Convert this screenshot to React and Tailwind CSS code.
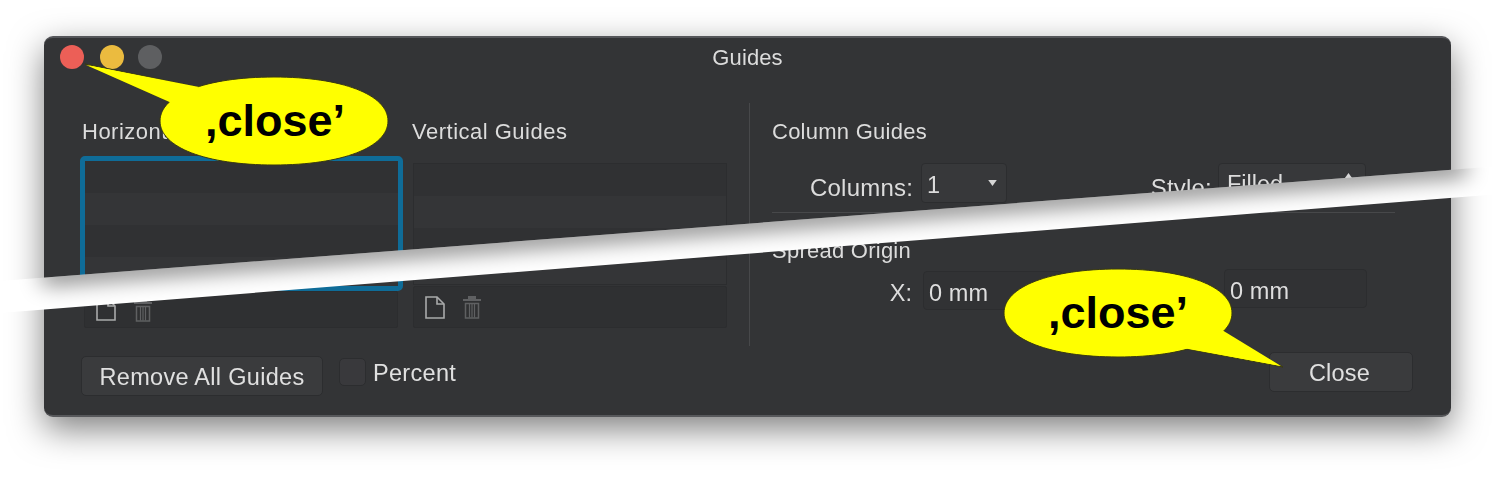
const FileIcon = ({ className }) => (
  <svg viewBox="0 0 20 23" className={className} fill="none" stroke="currentColor" strokeWidth="1.6">
    <path d="M1 1h11l7 7v14H1z" />
    <path d="M12 1v7h7" />
  </svg>
);

const TrashIcon = ({ className }) => (
  <svg viewBox="0 0 18 24" className={className} fill="none" stroke="currentColor" strokeWidth="1.5">
    <path d="M0 6h18V4H13V1H5v3H0z" fill="currentColor" stroke="none" />
    <path d="M2.5 8.5h13V23h-13z" />
    <path d="M6.5 9v13.5M9 9v13.5M11.5 9v13.5" strokeWidth="1.2" />
  </svg>
);

const Rows = ({ count }) => (
  <div className="flex flex-col">
    {Array.from({ length: count }).map((_, i) => (
      <div key={i} className={i % 2 === 0 ? "h-[32px] bg-[#303133]" : "h-[32px] bg-[#343537]"} />
    ))}
  </div>
);

const Toolbar = ({ h, pl }) => (
  <div className={`${h} ${pl} flex items-center gap-[18px] bg-[#2f3032] border border-[#2c2d2f] rounded-[2px] text-[#a9aaab]`}>
    <FileIcon className="w-[20px] h-[23px]" />
    <TrashIcon className="w-[18px] h-[24px] text-[#5f6062]" />
  </div>
);

const inputCls = "h-[39px] flex items-center pl-[5px] pt-[6px] bg-[#313234] border border-[#2c2d2f] rounded-[4px] text-[23.5px] tracking-[0.1px] text-[#dedede]";

export default function App() {
  return (
    <div className="relative w-[1500px] h-[488px] overflow-hidden bg-white font-['Liberation_Sans',Arial,sans-serif]">
      <div className="ml-[44px] mt-[36px] w-[1407px] absolute top-0 left-0">
        <div className="h-[381px] rounded-[9px] bg-[#333436] border-t-2 border-t-[#55565a] border-b-2 border-b-[#57585b] shadow-[0_12px_34px_rgba(0,0,0,0.5)] text-[#dcdcdc] blur-[0.4px]">
          <div className="h-[40px] grid grid-cols-[1fr_auto_1fr] items-center">
            <div className="flex items-center pl-[16px] pb-[2px]">
              <span className="w-[24px] h-[24px] rounded-full bg-[#ec5f57]" />
              <span className="ml-[16px] w-[24px] h-[24px] rounded-full bg-[#ebbb3f]" />
              <span className="ml-[14px] w-[24px] h-[24px] rounded-full bg-[#5e5f61]" />
            </div>
            <div className="text-[22px] leading-[26px] tracking-[0.1px]">Guides</div>
            <div />
          </div>

          <div className="mt-[25px] h-[243px] flex pl-[36px]">
            <div className="w-[323px]">
              <div className="h-[24px] mt-[17px] ml-[2px] text-[22px] leading-[24px] tracking-[0.5px] whitespace-nowrap">Horizontal Guides</div>
              <div className="mt-[12px] h-[135px] border-[5px] border-[#0f6c98] rounded-[5px] overflow-hidden bg-[#303133]">
                <Rows count={4} />
              </div>
              <div className="ml-[4px] mr-[5px]">
                <Toolbar h="h-[37px]" pl="pl-[11px]" />
              </div>
            </div>

            <div className="ml-[10px] w-[314px]">
              <div className="h-[24px] mt-[17px] -ml-[1px] text-[22px] leading-[24px] tracking-[0.5px]">Vertical Guides</div>
              <div className="mt-[19px] h-[122px] border border-[#2c2d2f] overflow-hidden">
                <Rows count={4} />
              </div>
              <div className="mt-[1px]">
                <Toolbar h="h-[42px]" pl="pl-[11px]" />
              </div>
            </div>

            <div className="ml-[22px] w-[1px] bg-[#47484a]" />

            <div className="ml-[22px] w-[623px] text-[22px]">
              <div className="h-[24px] mt-[17px] leading-[24px] tracking-[0.25px]">Column Guides</div>
              <div className="mt-[19px] flex items-center h-[40px]">
                <div className="w-[141px] text-right text-[24px] tracking-[0.2px] pt-[10px]">Columns:</div>
                <div className="ml-[8px] w-[86px] h-[40px] flex items-center justify-between pl-[5px] pr-[9px] bg-[#37383a] border border-[#2c2d2f] rounded-[4px] text-[23.5px]">
                  <span className="pt-[6px]">1</span>
                  <svg viewBox="0 0 10 7" className="w-[9px] h-[6px]"><path d="M0 0h10L5 7z" fill="#d6d6d6" /></svg>
                </div>
                <div className="w-[205px] text-right text-[24px] tracking-[0.2px] pt-[10px]">Style:</div>
                <div className="ml-[6px] w-[148px] h-[40px] flex items-center justify-between pl-[8px] pr-[12px] bg-[#37383a] border border-[#2c2d2f] rounded-[4px] text-[23.5px]">
                  <span className="pt-[4px]">Filled</span>
                  <svg viewBox="0 0 10 7" className="w-[9px] h-[6px] mb-[14px]"><path d="M0 7h10L5 0z" fill="#d6d6d6" /></svg>
                </div>
              </div>
              <div className="mt-[9px] h-[1px] bg-[#47484a]" />
              <div className="mt-[26px] h-[24px] leading-[24px] tracking-[0.25px]">Spread Origin</div>
              <div className="mt-[8px] flex items-start">
                <div className="w-[140px] mt-[5px] text-right text-[23.5px]">X:</div>
                <div className={`${inputCls} ml-[11px] w-[140px]`}>0 mm</div>
                <div className="w-[151px] mt-[5px] text-right text-[23.5px]">Y:</div>
                <div className={`${inputCls} -mt-[2px] ml-[10px] w-[143px]`}>0 mm</div>
              </div>
            </div>
          </div>

          <div className="mt-[6px] flex items-start pl-[37px] pr-[38px]">
            <button className="mt-[4px] pt-[3px] w-[242px] h-[40px] bg-[#3a3b3d] border border-[#2c2d2f] rounded-[5px] text-[23.5px] tracking-[0.3px] text-[#e0e0e0]">Remove All Guides</button>
            <span className="mt-[6px] ml-[16px] w-[27px] h-[28px] rounded-[5px] bg-[#39393c] border border-[#2c2d2f]" />
            <span className="mt-[7px] ml-[7px] text-[23.5px] leading-[28px] tracking-[0.3px] text-[#e0e0e0]">Percent</span>
            <button className="ml-auto pt-[3px] pr-[3px] w-[144px] h-[40px] bg-[#3a3b3d] border border-[#2c2d2f] rounded-[5px] text-[23.5px] tracking-[0.2px] text-[#e0e0e0]">Close</button>
          </div>
        </div>
      </div>

      <svg className="absolute left-0 top-0" width="1500" height="488" viewBox="0 0 1500 488">
        <defs>
          <clipPath id="tear"><path d="M0 281L1500 166V194L0 313z" /></clipPath>
          <filter id="soft" x="-5%" y="-100%" width="110%" height="300%"><feGaussianBlur stdDeviation="11" /></filter>
        </defs>
        <path d="M0 281L1500 166V194L0 313z" fill="#fff" />
        <g clipPath="url(#tear)">
          <path d="M42 265L1466 156L1466 176L42 285z" fill="#000" opacity="0.5" filter="url(#soft)" />
        </g>
        <g stroke="#3a3a10" strokeWidth="1">
          <path d="M85 64L203 88L170 102z" fill="#ffff00" />
          <path d="M160 121C160 94.6 206 77 274 77C342 77 388 94.6 388 121C388 147.4 342 165 274 165C206 165 160 147.4 160 121z" fill="#ffff00" />
          <path d="M199 87L86 65L174 104z" fill="#ffff00" stroke="none" />
          <path d="M1283 367L1220 333L1187 349z" fill="#ffff00" />
          <path d="M1004 313C1004 286.6 1050 269 1118 269C1186 269 1232 286.6 1232 313C1232 339.4 1186 357 1118 357C1050 357 1004 339.4 1004 313z" fill="#ffff00" />
          <path d="M1222 330L1281 366L1183 348z" fill="#ffff00" stroke="none" />
        </g>
        <text x="275" y="136" textAnchor="middle" fontFamily="Liberation Sans" fontWeight="700" fontSize="45" fill="#000">,close’</text>
        <text x="1118" y="328" textAnchor="middle" fontFamily="Liberation Sans" fontWeight="700" fontSize="45" fill="#000">,close’</text>
      </svg>
    </div>
  );
}
